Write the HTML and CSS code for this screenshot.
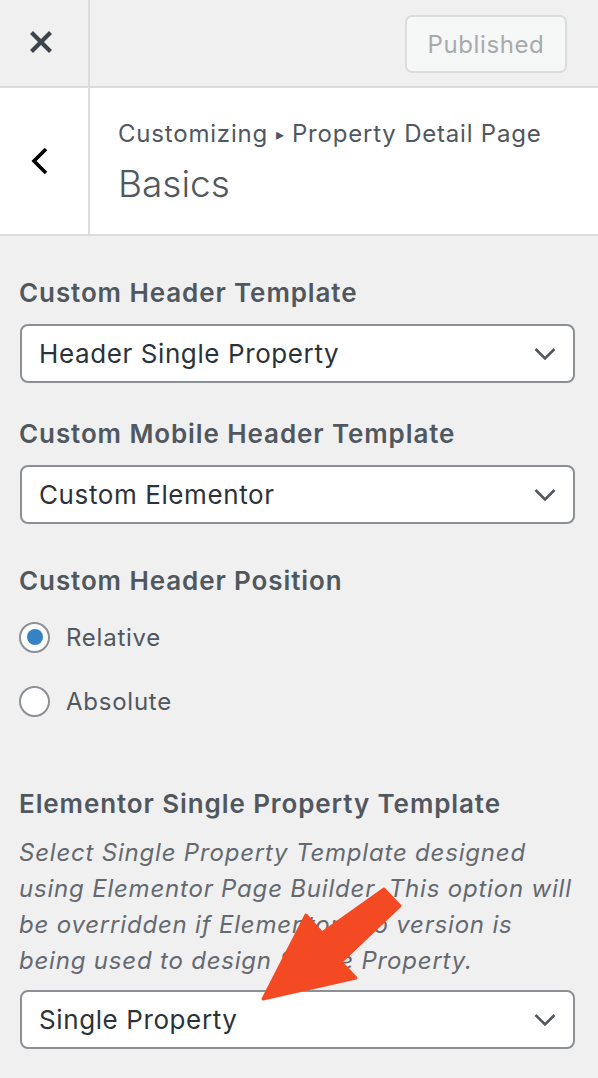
FILE: index.html
```html
<!DOCTYPE html>
<html>
<head>
<meta charset="utf-8">
<link rel="stylesheet" href="styles.css">
</head>
<body>
<div class="panel">
  <div class="topbar">
    <div class="close-cell">
      <svg class="close-icon" width="24" height="24" viewBox="0 0 24 24"><path d="M4 4 L20 20 M20 4 L4 20" stroke="#3c434a" stroke-width="4.2" stroke-linecap="square" fill="none"/></svg>
    </div>
    <div class="actions">
      <button class="publish">Published</button>
    </div>
  </div>
  <div class="section-head">
    <div class="back-cell">
      <svg width="20" height="30" viewBox="0 0 20 30"><path d="M16 3 L4 15 L16 27" stroke="#000" stroke-width="3.6" fill="none"/></svg>
    </div>
    <div class="titles">
      <div class="crumb">Customizing <span class="tri">▸</span> Property Detail Page</div>
      <div class="title">Basics</div>
    </div>
  </div>
  <div class="content">
    <div class="control">
      <div class="label">Custom Header Template</div>
      <div class="select"><span>Header Single Property</span><svg class="chev" width="22" height="14" viewBox="0 0 22 14"><path d="M1.5 2 L11 11.5 L20.5 2" stroke="#50575e" stroke-width="2.6" fill="none"/></svg></div>
    </div>
    <div class="control">
      <div class="label">Custom Mobile Header Template</div>
      <div class="select"><span>Custom Elementor</span><svg class="chev" width="22" height="14" viewBox="0 0 22 14"><path d="M1.5 2 L11 11.5 L20.5 2" stroke="#50575e" stroke-width="2.6" fill="none"/></svg></div>
    </div>
    <div class="control radios">
      <div class="label">Custom Header Position</div>
      <div class="radio-list">
        <div class="radio-row"><span class="radio checked"></span><span class="radio-label">Relative</span></div>
        <div class="radio-row"><span class="radio"></span><span class="radio-label">Absolute</span></div>
      </div>
    </div>
    <div class="control last">
      <div class="label">Elementor Single Property Template</div>
      <div class="desc">Select Single Property Template designed using Elementor Page Builder. This option will be overridden if Elementor Pro version is being used to design Single Property.</div>
      <div class="select tight"><span>Single Property</span><svg class="chev" width="22" height="14" viewBox="0 0 22 14"><path d="M1.5 2 L11 11.5 L20.5 2" stroke="#50575e" stroke-width="2.6" fill="none"/></svg></div>
    </div>
  </div>
  <svg class="arrow" width="598" height="1078" viewBox="0 0 598 1078"><polygon points="263,999 306,915 322,933 384,889 400,906 341,962 356,978" fill="#f44a24" stroke="#f44a24" stroke-width="3" stroke-linejoin="round"/></svg>
</div>
</body>
</html>
```

FILE: styles.css
```css
* { box-sizing: border-box; }
html, body { margin: 0; padding: 0; }
body {
  background: #f0f0f0;
  font-family: Inter, "Liberation Sans", sans-serif;
  color: #3c434a;
}
.panel { position: relative; width: 598px; height: 1078px; overflow: hidden; }
.topbar {
  display: flex;
  height: 88px;
  border-bottom: 2px solid #dcdcde;
}
.close-cell {
  width: 90px;
  border-right: 2px solid #dcdcde;
  display: flex;
  align-items: center;
  justify-content: center;
  padding-bottom: 2px;
  padding-right: 6px;
}
.actions {
  flex: 1;
  display: flex;
  justify-content: flex-end;
  align-items: flex-start;
  padding: 15px 31px 0 0;
}
.publish {
  width: 162px;
  height: 58px;
  border: 2px solid #dcdcde;
  border-radius: 7px;
  background: #f6f7f7;
  color: #a7aaad;
  font-family: Inter, "Liberation Sans", sans-serif;
  font-size: 24px;
  letter-spacing: 0.6px;
  padding: 0;
}
.section-head {
  display: flex;
  height: 148px;
  background: #fff;
  border-bottom: 2px solid #dcdcde;
}
.back-cell {
  width: 90px;
  border-right: 2px solid #dcdcde;
  display: flex;
  align-items: center;
  justify-content: center;
  padding-right: 8px;
}
.titles {
  padding: 26px 0 0 28px;
  color: #50575e;
}
.crumb { font-size: 24px; line-height: 40px; letter-spacing: 0.8px; }
.tri { font-size: 16px; position: relative; top: -2px; }
.title { font-size: 37px; line-height: 48px; font-weight: 300; margin-top: 4px; }
.content { padding: 39px 23px 0 19px; }
.control { margin-bottom: 33px; }
.control.radios { margin-top: 39px; margin-bottom: 0; }
.label {
  font-size: 26px;
  font-weight: 600;
  line-height: 36px;
  letter-spacing: 0.9px;
  color: #50575e;
  margin-bottom: 13px;
}
.select {
  margin-left: 1px;
  height: 59px;
  background: #fff;
  border: 2px solid #8c8f94;
  border-radius: 8px;
  display: flex;
  align-items: center;
  justify-content: space-between;
  padding: 0 17px 0 17px;
  font-size: 26px;
  letter-spacing: 0.6px;
  color: #2c3338;
}
.chev { margin-top: 1px; }
.radios .label { margin-bottom: 20px; }
.radio-list {
  display: flex;
  flex-direction: column;
  gap: 28px;
}
.radio-row {
  display: flex;
  align-items: center;
  height: 36px;
}
.radio {
  width: 31px;
  height: 31px;
  border-radius: 50%;
  border: 2px solid #8c8f94;
  background: #fff;
  margin-right: 16px;
  display: flex;
  align-items: center;
  justify-content: center;
}
.radio.checked::after {
  content: "";
  width: 16px;
  height: 16px;
  border-radius: 50%;
  background: #3582c4;
}
.radio-label { font-size: 24px; letter-spacing: 0.75px; color: #50575e; }
.control.last { margin-top: 67px; }
.desc {
  font-style: italic;
  font-size: 24px;
  line-height: 36px;
  letter-spacing: 0.8px;
  color: #646970;
  margin-top: 8px;
  margin-right: -8px;
}
.select.tight { margin-top: 11px; }
.arrow { position: absolute; left: 0; top: 0; pointer-events: none; }
```
